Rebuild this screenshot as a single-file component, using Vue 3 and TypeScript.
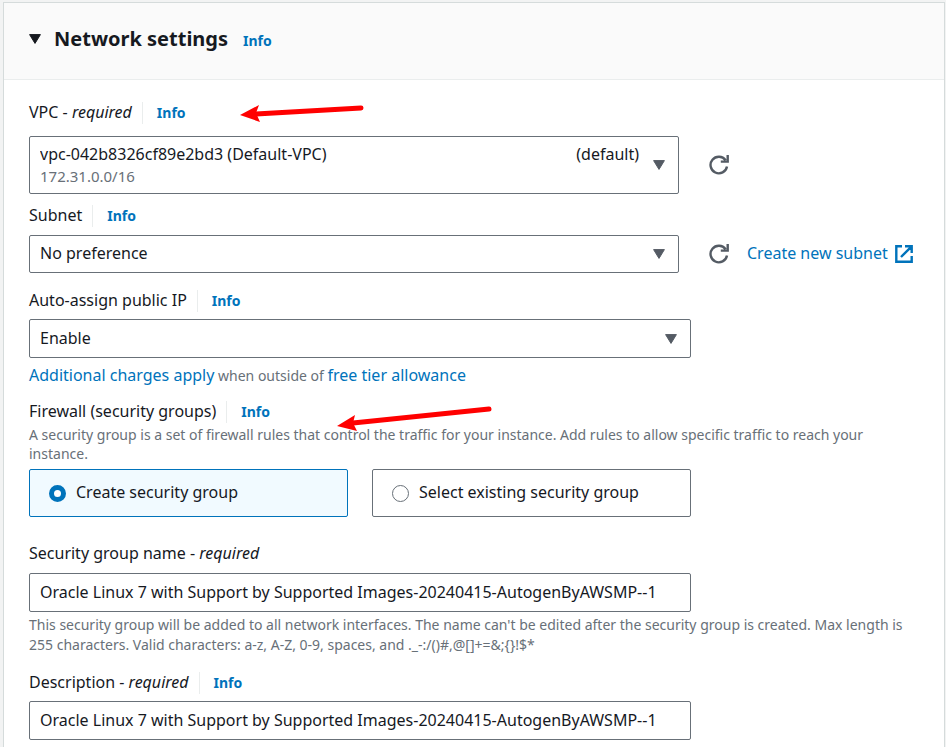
<script setup lang="ts">
import { ref } from 'vue'

const vpc = ref('vpc-042b8326cf89e2bd3')
const subnet = ref('none')
const publicIp = ref('enable')
const firewallMode = ref<'create' | 'existing'>('create')
const groupName = ref('Oracle Linux 7 with Support by Supported Images-20240415-AutogenByAWSMP--1')
const description = ref('Oracle Linux 7 with Support by Supported Images-20240415-AutogenByAWSMP--1')
const open = ref(true)
</script>

<template>
  <main class="page">
    <section class="panel">
      <header class="head">
        <button type="button" class="toggle" :aria-expanded="open" @click="open = !open">
          <svg class="caret dark" viewBox="0 0 12 10" aria-hidden="true"><path d="M.6.6h10.8L6 9.4z" /></svg>
          <span class="title">Network settings</span>
        </button>
        <a href="#" class="info">Info</a>
      </header>

      <div v-if="open" class="body">
        <div class="label-row">
          <label for="vpc">VPC - <em>required</em></label>
          <a href="#" class="info split">Info</a>
        </div>
        <div class="with-actions after-wide">
          <div class="picker">
            <select id="vpc" v-model="vpc" class="control tall">
              <option value="vpc-042b8326cf89e2bd3">vpc-042b8326cf89e2bd3 (Default-VPC)</option>
            </select>
            <div class="vpc-meta">
              <span class="tag">(default)</span>
              <span class="cidr">172.31.0.0/16</span>
            </div>
            <svg class="caret" viewBox="0 0 12 10" aria-hidden="true"><path d="M.6.6h10.8L6 9.4z" /></svg>
          </div>
          <div class="actions">
            <button type="button" class="refresh" aria-label="Refresh VPCs">
              <svg viewBox="0 0 20 20" aria-hidden="true">
                <path d="M18 11.5A8.3 8.3 0 1 1 16.6 5.2M18.7 0v6.6h-6.9" />
              </svg>
            </button>
          </div>
        </div>

        <div class="label-row near">
          <label for="subnet">Subnet</label>
          <a href="#" class="info split">Info</a>
        </div>
        <div class="with-actions after-mid">
          <div class="picker">
            <select id="subnet" v-model="subnet" class="control short">
              <option value="none">No preference</option>
            </select>
            <svg class="caret" viewBox="0 0 12 10" aria-hidden="true"><path d="M.6.6h10.8L6 9.4z" /></svg>
          </div>
          <div class="actions">
            <button type="button" class="refresh" aria-label="Refresh subnets">
              <svg viewBox="0 0 20 20" aria-hidden="true">
                <path d="M18 11.5A8.3 8.3 0 1 1 16.6 5.2M18.7 0v6.6h-6.9" />
              </svg>
            </button>
            <a href="#" class="link create">
              <span>Create new subnet</span>
              <svg viewBox="0 0 18 18" aria-hidden="true">
                <path d="M7 1.3H1.3v15.4h15.4V11M10 1.3h6.7V8M16.4 1.6 6 12" />
              </svg>
            </a>
          </div>
        </div>

        <div class="label-row far">
          <label for="public-ip">Auto-assign public IP</label>
          <a href="#" class="info split">Info</a>
        </div>
        <div class="narrow after-label">
          <div class="picker">
            <select id="public-ip" v-model="publicIp" class="control">
              <option value="enable">Enable</option>
              <option value="disable">Disable</option>
            </select>
            <svg class="caret" viewBox="0 0 12 10" aria-hidden="true"><path d="M.6.6h10.8L6 9.4z" /></svg>
          </div>
        </div>
        <p class="charges">
          <a href="#" class="link">Additional charges apply</a> when outside of
          <a href="#" class="link">free tier allowance</a>
        </p>

        <div class="label-row after-text">
          <span id="firewall-label" class="caption">Firewall (security groups)</span>
          <a href="#" class="info split">Info</a>
        </div>
        <p id="firewall-hint" class="hint tight">
          A security group is a set of firewall rules that control the traffic for your instance. Add rules to allow specific traffic to reach your instance.
        </p>
        <div class="narrow tiles" role="radiogroup" aria-labelledby="firewall-label" aria-describedby="firewall-hint">
          <label class="tile" :class="{ chosen: firewallMode === 'create' }">
            <input v-model="firewallMode" type="radio" name="firewall" value="create" />
            <span>Create security group</span>
          </label>
          <label class="tile" :class="{ chosen: firewallMode === 'existing' }">
            <input v-model="firewallMode" type="radio" name="firewall" value="existing" />
            <span>Select existing security group</span>
          </label>
        </div>

        <div class="label-row section">
          <label for="group-name">Security group name - <em>required</em></label>
        </div>
        <div class="narrow after-mid">
          <input id="group-name" v-model="groupName" type="text" class="control" aria-describedby="group-hint" />
        </div>
        <p id="group-hint" class="hint">
          This security group will be added to all network interfaces. The name can't be edited after the security group is created. Max length is 255 characters. Valid characters: a-z, A-Z, 0-9, spaces, and ._-:/()#,@[]+=&amp;;{}!$*
        </p>

        <div class="label-row far">
          <label for="description">Description - <em>required</em></label>
          <a href="#" class="info split">Info</a>
        </div>
        <div class="narrow after-label">
          <input id="description" v-model="description" type="text" class="control" />
        </div>
      </div>
    </section>

    <!-- Callout arrows drawn over the form -->
    <svg class="arrow arrow-vpc" viewBox="0 0 124 20" aria-hidden="true">
      <path class="shaft" d="M121 5 16 11" />
      <path class="tip" d="M0 12 19 2l-3 8 4 9z" />
    </svg>
    <svg class="arrow arrow-firewall" viewBox="0 0 156 26" aria-hidden="true">
      <path class="shaft" d="M152 4 16 18" />
      <path class="tip" d="M0 21 18 10l-2 8 4 8z" />
    </svg>
  </main>
</template>

<style>
body {
  margin: 0;
  background: #f2f3f3;
}
</style>

<style scoped>
* {
  box-sizing: border-box;
}

.page {
  position: relative;
  min-height: 100vh;
  padding: 2px 1px 0 3px;
  overflow: hidden;
  font-family: "Noto Sans", "Open Sans", sans-serif;
  font-size: 16px;
  line-height: 22px;
  color: #16191f;
}

.panel {
  min-height: calc(100vh - 2px);
  background: #fff;
  border: 1px solid #d5dbdb;
  border-bottom: 0;
}

.head {
  display: flex;
  align-items: center;
  height: 77px;
  padding: 0 25px 5px;
  background: #fafafa;
  border-bottom: 1px solid #eaeded;
}

.toggle {
  display: flex;
  align-items: center;
  gap: 13px;
  padding: 0;
  border: 0;
  background: none;
  color: inherit;
  font: inherit;
  cursor: pointer;
}

.title {
  font-size: 20px;
  font-weight: 700;
  line-height: 28px;
}

.caret {
  width: 12px;
  height: 10px;
  fill: #545b64;
  stroke: #545b64;
  stroke-linejoin: round;
}

.caret.dark {
  fill: #16191f;
  stroke: #16191f;
}

.info {
  margin-left: 15px;
  color: #0073bb;
  font-size: 14px;
  font-weight: 700;
  text-decoration: none;
}

.head .info {
  padding-top: 4px;
}

.info.split {
  margin-left: 10px;
  padding-left: 14px;
  border-left: 1px solid #eaeded;
}

.body {
  padding: 22px 25px;
}

.label-row {
  display: flex;
  height: 22px;
}

.label-row label,
.caption {
  line-height: 20px;
}

.near {
  margin-top: 11px;
}

.far {
  margin-top: 17px;
}

.after-text {
  margin-top: 14px;
}

.section {
  margin-top: 26px;
}

.after-wide {
  margin-top: 12px;
}

.after-mid {
  margin-top: 8px;
}

.after-label {
  margin-top: 7px;
}

.with-actions {
  display: grid;
  grid-template-columns: minmax(0, 1fr) 240px;
  align-items: center;
}

.narrow {
  margin-right: 228px;
}

.picker {
  display: grid;
  align-items: center;
}

.picker > * {
  grid-area: 1 / 1;
}

.picker > .caret {
  justify-self: end;
  margin-right: 14px;
  pointer-events: none;
}

.control {
  display: block;
  width: 100%;
  height: 39px;
  padding: 0 9px 2px 10px;
  appearance: none;
  border: 1px solid #687078;
  border-radius: 2px;
  background: #fff;
  color: #16191f;
  font: inherit;
}

.control.short {
  height: 38px;
}

.control.tall {
  height: 58px;
  padding-bottom: 22px;
}

.vpc-meta {
  display: grid;
  align-self: start;
  padding: 7px 40px 0 11px;
  pointer-events: none;
}

.tag {
  justify-self: end;
}

.cidr {
  color: #687078;
  font-size: 15px;
}

.actions {
  display: flex;
  align-items: center;
  gap: 18px;
  padding-left: 30px;
}

.refresh {
  display: flex;
  padding: 0;
  border: 0;
  background: none;
  cursor: pointer;
}

.refresh svg {
  width: 20px;
  height: 20px;
  fill: none;
  stroke: #545b64;
  stroke-width: 2.4;
}

.link {
  color: #0073bb;
  font-size: 16px;
  text-decoration: none;
}

.create {
  display: flex;
  align-items: center;
  gap: 7px;
  white-space: nowrap;
}

.create span,
.tile span {
  padding-bottom: 2px;
}

.create svg {
  width: 18px;
  height: 18px;
  fill: none;
  stroke: #0073bb;
  stroke-width: 2.4;
}

.charges {
  margin: 6px 0 0;
  color: #687078;
  font-size: 14px;
}

.hint {
  margin: 3px 0 0;
  color: #687078;
  font-size: 14px;
  line-height: 20px;
}

.hint.tight {
  margin-top: 2px;
  line-height: 19px;
}

.tiles {
  display: grid;
  grid-template-columns: 1fr 1fr;
  gap: 24px;
  margin-top: 6px;
}

.tile {
  display: flex;
  align-items: center;
  gap: 10px;
  height: 48px;
  padding: 0 19px;
  border: 1px solid #687078;
  border-radius: 2px;
  white-space: nowrap;
}

.tile.chosen {
  border-color: #0073bb;
  background: #f1faff;
}

.tile input {
  width: 17px;
  height: 17px;
  margin: 0;
  appearance: none;
  border: 1px solid #687078;
  border-radius: 50%;
  background: #fff;
}

.tile input:checked {
  border: 5px solid #0073bb;
}

.arrow {
  position: absolute;
  pointer-events: none;
}

.arrow-vpc {
  top: 103px;
  left: 240px;
  width: 124px;
  height: 20px;
}

.arrow-firewall {
  top: 405px;
  left: 337px;
  width: 156px;
  height: 26px;
}

.shaft {
  fill: none;
  stroke: #f00;
  stroke-width: 5;
  stroke-linecap: round;
}

.tip {
  fill: #f00;
}
</style>
